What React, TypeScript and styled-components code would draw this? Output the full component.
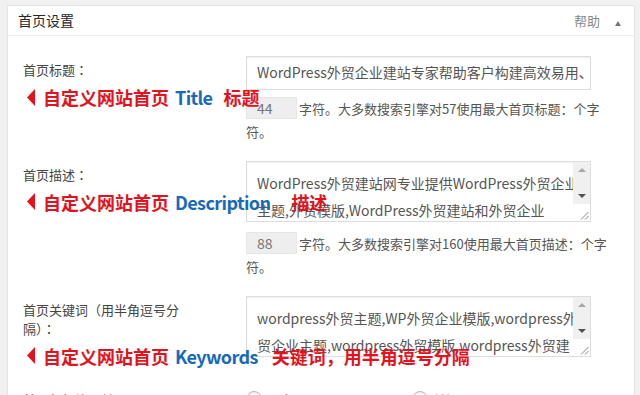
import React from 'react';
import styled, { createGlobalStyle } from 'styled-components';

const Global = createGlobalStyle`
  html, body { margin: 0; padding: 0; background: #f1f1f1; }
  body {
    font-family: "Noto Sans CJK SC", "Noto Sans", sans-serif;
    width: 640px;
    height: 395px;
    overflow: hidden;
  }
`;

const Page = styled.div`
  padding: 5px 0 0 7px;
`;

const Panel = styled.div`
  width: 628px;
  box-sizing: border-box;
  background: #fff;
  border: 1px solid #e5e5e5;
  box-shadow: 0 1px 1px rgba(0, 0, 0, 0.04);
`;

const Header = styled.div`
  display: flex;
  align-items: center;
  height: 29px;
  padding: 0 13px 0 10px;
  border-bottom: 1px solid #eee;
`;

const Title = styled.div`
  flex: 1;
  font-size: 14px;
  color: #23282d;
  line-height: 29px;
`;

const Help = styled.div`
  font-size: 13px;
  color: #888;
  margin-right: 15px;
`;

const Caret = styled.span`
  width: 0;
  height: 0;
  margin-top: 6px;
  border-left: 3.5px solid transparent;
  border-right: 3.5px solid transparent;
  border-bottom: 5px solid #72777c;
`;

const Content = styled.div`
  padding-top: 11px;
`;

const Row = styled.div`
  display: flex;
  padding: 9px 0;
`;

const LabelCell = styled.div`
  width: 223px;
  flex-shrink: 0;
  padding: 4px 0 0 15px;
`;

const LabelText = styled.div`
  max-width: 165px;
  font-size: 13px;
  line-height: 19px;
  color: #444;
`;

const Punct = styled.span`
  font-family: "Noto Sans CJK JP", "Noto Sans CJK SC", sans-serif;
`;

const Annotation = styled.div`
  position: relative;
  z-index: 2;
  display: flex;
  align-items: center;
  margin: 6px 0 0 4px;
  white-space: nowrap;
  font-size: 18px;
  font-weight: bold;
  line-height: 24px;
  color: #e3121c;
`;

const Pointer = styled.svg`
  width: 8px;
  height: 17px;
  margin-right: 8px;
  flex-shrink: 0;
`;

const Blue = styled.span<{ $after: number }>`
  color: #1769b9;
  letter-spacing: -0.6px;
  margin: 0 ${(p) => p.$after}px 0 6px;
`;

const FieldCell = styled.div`
  flex: 1;
  min-width: 0;
`;

const TextInput = styled.div`
  width: 345px;
  height: 33.5px;
  box-sizing: border-box;
  border: 1px solid #ddd;
  box-shadow: inset 0 1px 2px rgba(0, 0, 0, 0.07);
  padding-left: 10px;
  font-size: 14px;
  line-height: 31px;
  color: #555;
  white-space: nowrap;
  overflow: hidden;
`;

const TextArea = styled.div`
  width: 345px;
  height: 61px;
  box-sizing: border-box;
  display: flex;
  border: 1px solid #ddd;
  box-shadow: inset 0 1px 2px rgba(0, 0, 0, 0.07);
`;

const AreaBody = styled.div`
  flex: 1;
  overflow: hidden;
  padding: 8px 0 0 10px;
  font-size: 14px;
  line-height: 27px;
  color: #555;
`;

const AreaLine = styled.div`
  white-space: nowrap;
`;

const ScrollCol = styled.div`
  width: 17px;
  display: flex;
  flex-direction: column;
`;

const Track = styled.div`
  flex: 1;
  background: #f0f0f0;
  display: flex;
  flex-direction: column;
  justify-content: space-between;
`;

const ArrowBox = styled.div`
  height: 16px;
  display: flex;
  align-items: center;
  justify-content: center;
`;

const Arrow = styled.span<{ $up?: boolean; $color: string }>`
  width: 0;
  height: 0;
  border-left: 4px solid transparent;
  border-right: 4px solid transparent;
  ${(p) =>
    p.$up
      ? `border-bottom: 4px solid ${p.$color};`
      : `border-top: 4px solid ${p.$color};`}
`;

const Corner = styled.div`
  height: 17px;
  background: #fff;
  display: flex;
  align-items: flex-end;
  justify-content: flex-end;
`;

const Hint = styled.div<{ $gap: number }>`
  margin-top: ${(p) => p.$gap}px;
  font-size: 13px;
  line-height: 23px;
  color: #555;
  white-space: nowrap;
`;

const Count = styled.span`
  display: inline-block;
  vertical-align: top;
  width: 51px;
  height: 22px;
  box-sizing: border-box;
  margin-right: 2px;
  padding-left: 10px;
  background: #eee;
  border: 1px solid #e6e6e6;
  font-size: 14px;
  line-height: 20px;
  color: #777;
`;

const RadioGroup = styled.div`
  display: flex;
  align-items: center;
  gap: 6px;
  padding-top: 4px;
`;

const RadioOption = styled.label`
  display: flex;
  align-items: center;
  gap: 5px;
  width: 160px;
  font-size: 13px;
  color: #555;
`;

const RadioDot = styled.span`
  width: 16px;
  height: 16px;
  box-sizing: border-box;
  border-radius: 50%;
  border: 1px solid #b4b9be;
  background: #fff;
  box-shadow: inset 0 1px 2px rgba(0, 0, 0, 0.1);
`;

const Grip = () => (
  <svg width="15" height="15" viewBox="0 0 15 15">
    <line x1="13.5" y1="6" x2="6" y2="13.5" stroke="#888" strokeWidth="1" />
    <line x1="13.5" y1="10" x2="10" y2="13.5" stroke="#888" strokeWidth="1" />
  </svg>
);

const FakeScrollbar = () => (
  <ScrollCol>
    <Track>
      <ArrowBox>
        <Arrow $up $color="#a8a8a8" />
      </ArrowBox>
      <ArrowBox>
        <Arrow $color="#505050" />
      </ArrowBox>
    </Track>
    <Corner>
      <Grip />
    </Corner>
  </ScrollCol>
);

const Note = ({ blue, after, tail }: { blue: string; after: number; tail: string }) => (
  <Annotation>
    <Pointer viewBox="0 0 8 17">
      <polygon points="8,0 8,17 0,8.5" fill="#e3121c" />
    </Pointer>
    <span>自定义网站首页</span>
    <Blue $after={after}>{blue}</Blue>
    <span>{tail}</span>
  </Annotation>
);

export default function App() {
  return (
    <>
      <Global />
      <Page>
        <Panel>
          <Header>
            <Title>首页设置</Title>
            <Help>帮助</Help>
            <Caret />
          </Header>
          <Content>
            <Row>
              <LabelCell>
                <LabelText>
                  首页标题<Punct>：</Punct>
                </LabelText>
                <Note blue="Title" after={11} tail="标题" />
              </LabelCell>
              <FieldCell>
                <TextInput>WordPress外贸企业建站专家帮助客户构建高效易用、安全稳定的外贸网站</TextInput>
                <Hint $gap={7}>
                  <Count>44</Count>字符。大多数搜索引擎对57使用最大首页标题：个字
                  <br />
                  符。
                </Hint>
              </FieldCell>
            </Row>
            <Row>
              <LabelCell>
                <LabelText>
                  首页描述<Punct>：</Punct>
                </LabelText>
                <Note blue="Description" after={21} tail="描述" />
              </LabelCell>
              <FieldCell>
                <TextArea>
                  <AreaBody>
                    <AreaLine>WordPress外贸建站网专业提供WordPress外贸企业</AreaLine>
                    <AreaLine>主题,外贸模版,WordPress外贸建站和外贸企业</AreaLine>
                    <AreaLine>网站定制开发服务。</AreaLine>
                  </AreaBody>
                  <FakeScrollbar />
                </TextArea>
                <Hint $gap={10}>
                  <Count>88</Count>字符。大多数搜索引擎对160使用最大首页描述：个字
                  <br />
                  符。
                </Hint>
              </FieldCell>
            </Row>
            <Row>
              <LabelCell>
                <LabelText>
                  首页关键词（用半角逗号分隔<Punct>）：</Punct>
                </LabelText>
                <Note blue="Keywords" after={14} tail="关键词，用半角逗号分隔" />
              </LabelCell>
              <FieldCell>
                <TextArea>
                  <AreaBody>
                    <AreaLine>wordpress外贸主题,WP外贸企业模版,wordpress外</AreaLine>
                    <AreaLine>贸企业主题,wordpress外贸模版,wordpress外贸建</AreaLine>
                    <AreaLine>站</AreaLine>
                  </AreaBody>
                  <FakeScrollbar />
                </TextArea>
              </FieldCell>
            </Row>
            <Row>
              <LabelCell>
                <LabelText>
                  首页幻灯片开关<Punct>：</Punct>
                </LabelText>
              </LabelCell>
              <FieldCell>
                <RadioGroup>
                  <RadioOption>
                    <RadioDot />
                    开启
                  </RadioOption>
                  <RadioOption>
                    <RadioDot />
                    关闭
                  </RadioOption>
                </RadioGroup>
              </FieldCell>
            </Row>
          </Content>
        </Panel>
      </Page>
    </>
  );
}
